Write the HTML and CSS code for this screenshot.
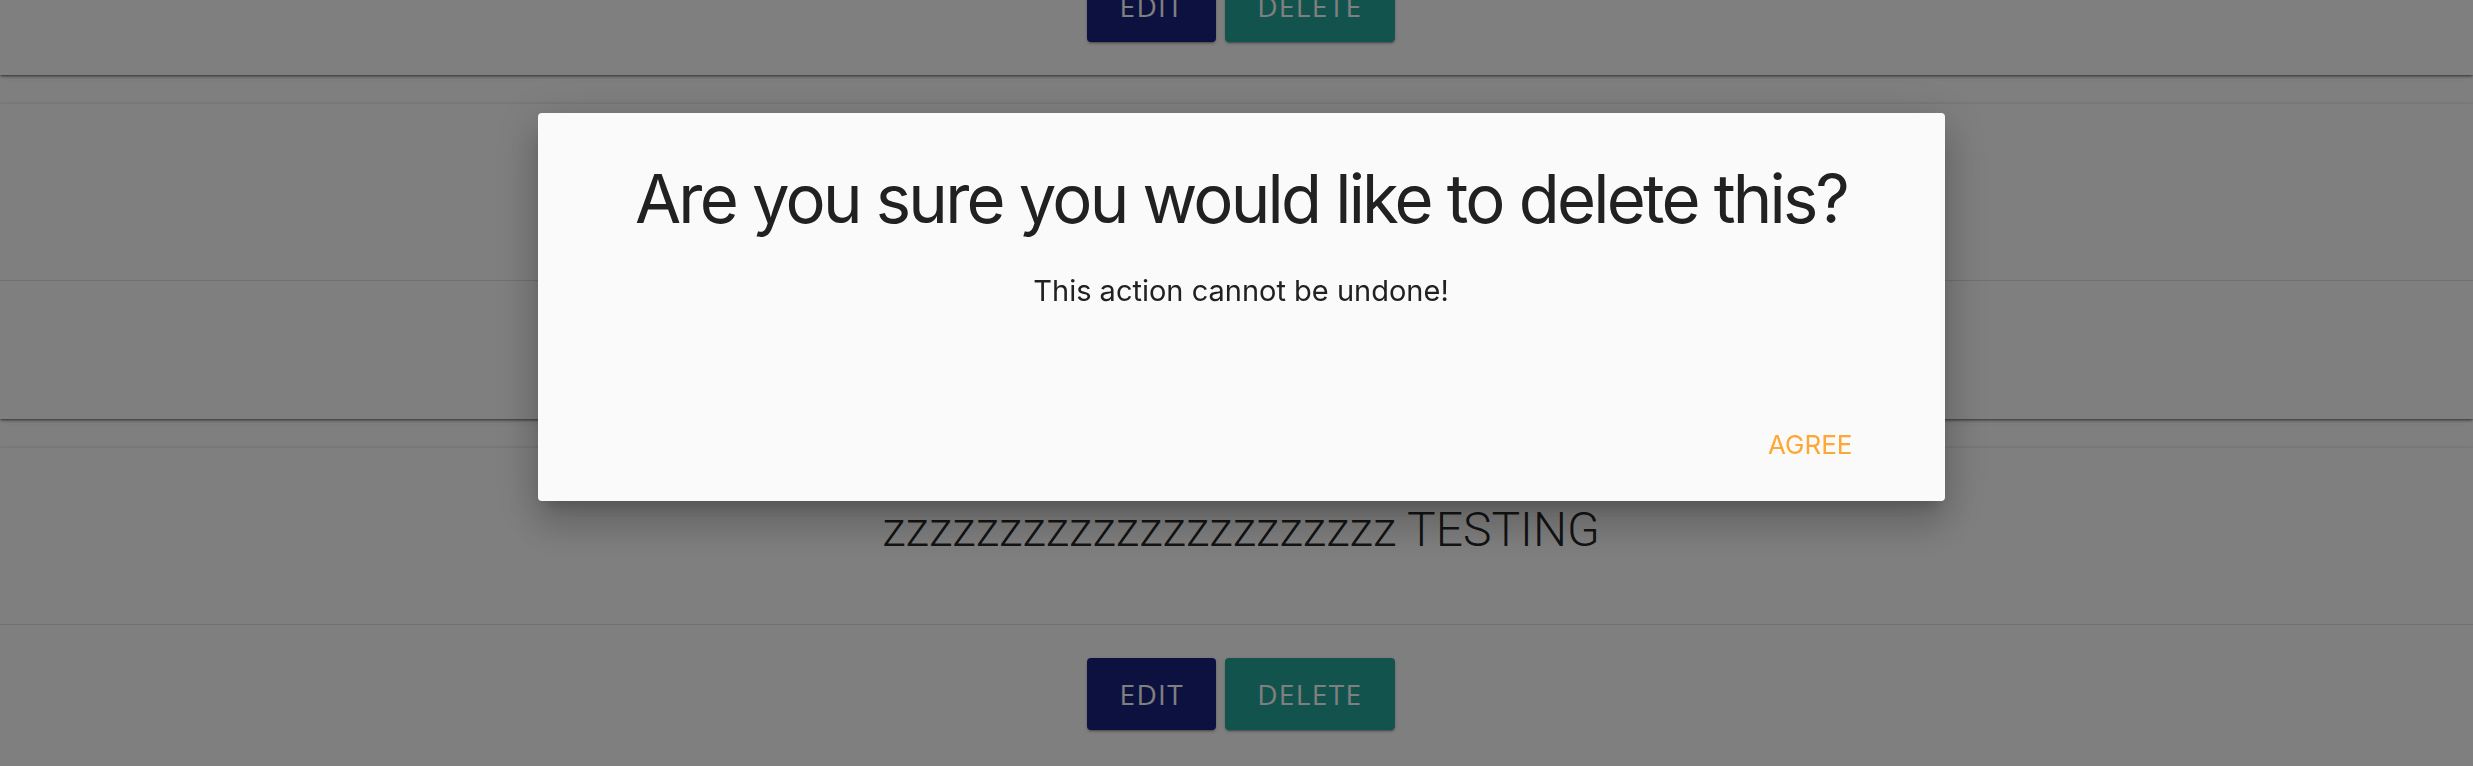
FILE: index.html
```html
<!DOCTYPE html>
<html lang="en">
<head>
<meta charset="utf-8">
<title>Delete confirmation</title>
<link rel="stylesheet" href="styles.css">
</head>
<body>
<main class="list">
  <section class="card">
    <div class="card-content"><h2 class="item-text">zzzzzzzzzzzzzzzzzzzzzz TESTING</h2></div>
    <div class="card-actions">
      <button class="btn btn-edit">EDIT</button>
      <button class="btn btn-delete">DELETE</button>
    </div>
  </section>
  <section class="card">
    <div class="card-content"><h2 class="item-text">zzzzzzzzzzzzzzzzzzzzzz TESTING</h2></div>
    <div class="card-actions">
      <button class="btn btn-edit">EDIT</button>
      <button class="btn btn-delete">DELETE</button>
    </div>
  </section>
  <section class="card">
    <div class="card-content"><h2 class="item-text">zzzzzzzzzzzzzzzzzzzzzz TESTING</h2></div>
    <div class="card-actions">
      <button class="btn btn-edit">EDIT</button>
      <button class="btn btn-delete">DELETE</button>
    </div>
  </section>
</main>

<div class="backdrop">
  <div class="dialog" role="dialog">
    <h1 class="dialog-title">Are you sure you would like to delete this?</h1>
    <p class="dialog-text">This action cannot be undone!</p>
    <div class="dialog-actions">
      <button class="btn-text">AGREE</button>
    </div>
  </div>
</div>
</body>
</html>
```
FILE: styles.css
```css
html, body {
  margin: 0;
  padding: 0;
  background: #ffffff;
  overflow: hidden;
}

.list {
  margin-top: -240px;
  display: flex;
  flex-direction: column;
  gap: 29px;
}

.card {
  background: #ffffff;
  height: 315px;
  display: flex;
  flex-direction: column;
  box-shadow: 0 3px 2px -1px rgba(0,0,0,0.3), 0 1px 1px 0 rgba(0,0,0,0.16), 0 -1px 2px 0 rgba(0,0,0,0.08), 0 2px 8px 0 rgba(0,0,0,0.08);
}

.card-content {
  height: 177px;
  box-sizing: border-box;
  padding: 54px 0 0 9px;
  border-bottom: 1px solid rgba(0,0,0,0.12);
  text-align: center;
}

.item-text {
  margin: 0;
  font-family: Roboto, "Liberation Sans", sans-serif;
  font-weight: 300;
  font-size: 48px;
  line-height: 56px;
  color: rgba(0,0,0,0.87);
}

.card-actions {
  flex: 1;
  display: flex;
  justify-content: center;
  align-items: flex-start;
  gap: 9px;
  padding: 33px 0 0 9px;
}

.btn {
  height: 72px;
  border: none;
  border-radius: 4px;
  padding: 0 32px;
  font-family: "Open Sans", "Liberation Sans", sans-serif;
  font-size: 28px;
  font-weight: 400;
  letter-spacing: 1.4px;
  color: #ffffff;
  box-shadow: 0 3px 1px -2px rgba(0,0,0,0.2), 0 2px 2px 0 rgba(0,0,0,0.14), 0 1px 5px 0 rgba(0,0,0,0.12);
}

.btn-edit { background: #1a237e; }
.btn-delete { background: #26a69a; }

.backdrop {
  position: fixed;
  inset: 0;
  background: rgba(0,0,0,0.5);
  display: flex;
  justify-content: center;
  align-items: flex-start;
  padding: 113px 0 0 9px;
}

.dialog {
  width: 1407px;
  height: 388px;
  box-sizing: border-box;
  background: #fafafa;
  border-radius: 4px;
  display: flex;
  flex-direction: column;
  align-items: center;
  padding-top: 46px;
  font-family: Inter, "Noto Sans", sans-serif;
  color: #212121;
  box-shadow: 0 11px 15px -7px rgba(0,0,0,0.2), 0 24px 38px 3px rgba(0,0,0,0.14), 0 9px 46px 8px rgba(0,0,0,0.12);
}

.dialog-title {
  margin: 0;
  font-size: 67px;
  font-weight: 400;
  line-height: 1.2;
  letter-spacing: -2.8px;
}

.dialog-text {
  margin: 31px 0 0;
  font-size: 29px;
  line-height: 1.45;
}

.dialog-actions {
  margin-top: auto;
  align-self: stretch;
  display: flex;
  justify-content: flex-end;
  padding: 0 92px 37px 0;
}

.btn-text {
  border: none;
  background: transparent;
  padding: 0;
  font-family: Inter, "Noto Sans", sans-serif;
  font-size: 26px;
  line-height: 1.5;
  color: #ffa733;
}
```
